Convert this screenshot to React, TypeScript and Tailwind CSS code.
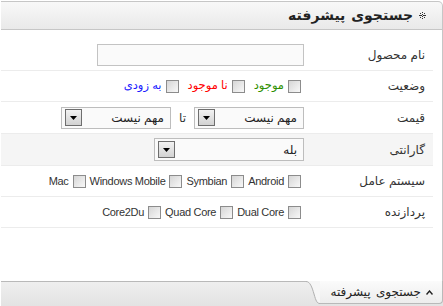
import React from "react";

const Checkbox = () => (
  <span className="inline-block w-[13px] h-[13px] shrink-0 border border-[#8c8c8c] bg-gradient-to-br from-[#d6d6d6] to-[#f8f8f8]" />
);

const DropBtn = () => (
  <span className="flex items-center justify-center w-[17px] h-[17px] border border-[#6e6e6e] bg-gradient-to-b from-[#f2f2f2] to-[#d2d2d2]">
    <svg width="7" height="4" viewBox="0 0 7 4">
      <path d="M0 0 H7 L3.5 4 Z" fill="#000" />
    </svg>
  </span>
);

const Select = ({ text, cls }: { text: string; cls: string }) => (
  <div className={`flex items-center justify-between border border-[#bdbdbd] bg-[#fafafa] pr-[6px] pl-[3px] ${cls}`}>
    <span className="text-[12px] text-[#222]">{text}</span>
    <DropBtn />
  </div>
);

const Row = ({ label, children, cls = "" }: { label: string; children: React.ReactNode; cls?: string }) => (
  <div className={`flex items-center border-b border-[#ececec] ${cls}`}>
    <div className="w-[125px] shrink-0 pr-[8px] text-[12px] text-[#333]">{label}</div>
    <div className="flex-1 flex items-center pr-[4px]">{children}</div>
  </div>
);

const CheckItem = ({ text, color = "text-[#333]", latin = false }: { text: string; color?: string; latin?: boolean }) => (
  <span className="flex items-center gap-[4px]">
    <Checkbox />
    <span className={`${latin ? "text-[11px] tracking-[-0.3px]" : "text-[11.5px]"} leading-none ${color}`}>{text}</span>
  </span>
);

export default function App() {
  return (
    <div className="w-[443px] h-[306px] bg-white pt-px overflow-hidden font-['Liberation_Sans','DejaVu_Sans',sans-serif]" dir="rtl">
      <div className="w-[442px]">
        {/* header */}
        <div className="h-[29px] flex items-center border-t border-r border-b border-[#c6c6c6] rounded-tr-[5px] bg-gradient-to-b from-[#f8f8f8] to-[#e9e9e9] pr-[16px]">
          <svg width="7" height="7" viewBox="0 0 7 7" className="shrink-0">
            <rect x="3" y="0" width="1" height="1" fill="#333" />
            <rect x="1" y="1" width="1" height="1" fill="#333" />
            <rect x="5" y="1" width="1" height="1" fill="#333" />
            <rect x="1" y="3" width="1" height="1" fill="#333" />
            <rect x="3" y="2" width="1" height="1" fill="#333" />
            <rect x="5" y="3" width="1" height="1" fill="#333" />
            <rect x="0" y="3" width="1" height="1" fill="#333" />
            <rect x="2" y="3" width="1" height="1" fill="#333" />
            <rect x="4" y="3" width="1" height="1" fill="#333" />
            <rect x="6" y="3" width="1" height="1" fill="#333" />
            <rect x="3" y="4" width="1" height="1" fill="#333" />
            <rect x="1" y="5" width="1" height="1" fill="#333" />
            <rect x="5" y="5" width="1" height="1" fill="#333" />
            <rect x="3" y="6" width="1" height="1" fill="#333" />
          </svg>
          <span className="mr-[6px] text-[14px] font-bold text-[#222] [word-spacing:2px]">جستجوی پیشرفته</span>
        </div>

        {/* body */}
        <div className="h-[251px] bg-white border-r border-[#c6c6c6] pr-[9px]">
          <Row label="نام محصول" cls="h-[41px] pt-[10px]">
            <div className="w-[207px] h-[22px] border border-[#c3c3c3] bg-[#fafafa]" />
          </Row>
          <Row label="وضعیت" cls="h-[31px]">
            <div className="flex items-center gap-[9px] mr-[3px]">
              <CheckItem text="موجود" color="text-[#2f8f00]" />
              <CheckItem text="نا موجود" color="text-[#ff0000]" />
              <CheckItem text="به زودی" color="text-[#1a1aff]" />
            </div>
          </Row>
          <Row label="قیمت" cls="h-[32px]">
            <Select text="مهم نیست" cls="w-[110px] h-[22px]" />
            <span className="mx-[8px] text-[12px] text-[#333]">تا</span>
            <Select text="مهم نیست" cls="w-[110px] h-[22px]" />
          </Row>
          <Row label="گارانتی" cls="h-[32px] bg-[#f5f5f5]">
            <Select text="بله" cls="w-[150px] h-[23px]" />
          </Row>
          <Row label="سیستم عامل" cls="h-[31px]">
            <div className="flex items-center gap-[4px] mr-[3px]">
              <CheckItem text="Android" latin />
              <CheckItem text="Symbian" latin />
              <CheckItem text="Windows Mobile" latin />
              <CheckItem text="Mac" latin />
            </div>
          </Row>
          <Row label="پردازنده" cls="h-[31px]">
            <div className="flex items-center gap-[4px] mr-[3px]">
              <CheckItem text="Dual Core" latin />
              <CheckItem text="Quad Core" latin />
              <CheckItem text="Core2Du" latin />
            </div>
          </Row>
        </div>

        {/* bottom bar */}
        <div className="h-[25px] flex bg-gradient-to-b from-[#efefef] to-[#e3e3e3]">
          <div className="w-[137px] shrink-0 flex h-[23px]">
            <div className="flex-1 flex items-center border-r border-b border-[#b9b9b9] rounded-br-[4px] bg-gradient-to-b from-[#fbfbfb] to-[#ededed] pr-[9px]">
              <svg width="7" height="5" viewBox="0 0 7 5" className="shrink-0">
                <path d="M0.5 4.5 L3.5 1 L6.5 4.5" fill="none" stroke="#222" strokeWidth="1.4" />
              </svg>
              <span className="mr-[5px] text-[12px] text-[#222] [word-spacing:2px]">جستجوی پیشرفته</span>
            </div>
            <svg width="14" height="23" viewBox="0 0 14 23" className="shrink-0">
              <path d="M14 0 L0 0 C4 0 6 6 8 13 C10 20 11 22.5 14 22.5 Z" fill="#f6f6f6" />
              <path d="M0 0.5 C4 0.5 6 6 8 13 C10 20 11 22.5 14 22.5" fill="none" stroke="#b0b0b0" strokeWidth="1" />
            </svg>
          </div>
          <div className="flex-1 border-t border-[#b9b9b9]" />
        </div>
      </div>
    </div>
  );
}
